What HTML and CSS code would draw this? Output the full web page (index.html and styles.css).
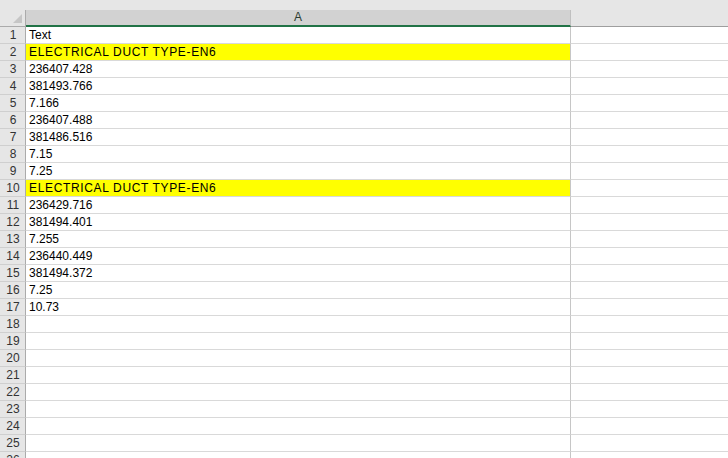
FILE: index.html
```html
<!DOCTYPE html>
<html>
<head>
<meta charset="utf-8">
<link rel="stylesheet" href="styles.css">
</head>
<body>
<div class="sheet">
  <div class="top-strip"></div>
  <div class="head">
    <div class="corner"><span class="tri"></span></div>
    <div class="col-a">A</div>
    <div class="col-rest"></div>
  </div>
  <div class="row"><div class="rh">1</div><div class="a">Text</div><div class="rest"></div></div>
  <div class="row"><div class="rh">2</div><div class="a hl">ELECTRICAL DUCT TYPE-EN6</div><div class="rest"></div></div>
  <div class="row"><div class="rh">3</div><div class="a">236407.428</div><div class="rest"></div></div>
  <div class="row"><div class="rh">4</div><div class="a">381493.766</div><div class="rest"></div></div>
  <div class="row"><div class="rh">5</div><div class="a">7.166</div><div class="rest"></div></div>
  <div class="row"><div class="rh">6</div><div class="a">236407.488</div><div class="rest"></div></div>
  <div class="row"><div class="rh">7</div><div class="a">381486.516</div><div class="rest"></div></div>
  <div class="row"><div class="rh">8</div><div class="a">7.15</div><div class="rest"></div></div>
  <div class="row"><div class="rh">9</div><div class="a">7.25</div><div class="rest"></div></div>
  <div class="row"><div class="rh">10</div><div class="a hl">ELECTRICAL DUCT TYPE-EN6</div><div class="rest"></div></div>
  <div class="row"><div class="rh">11</div><div class="a">236429.716</div><div class="rest"></div></div>
  <div class="row"><div class="rh">12</div><div class="a">381494.401</div><div class="rest"></div></div>
  <div class="row"><div class="rh">13</div><div class="a">7.255</div><div class="rest"></div></div>
  <div class="row"><div class="rh">14</div><div class="a">236440.449</div><div class="rest"></div></div>
  <div class="row"><div class="rh">15</div><div class="a">381494.372</div><div class="rest"></div></div>
  <div class="row"><div class="rh">16</div><div class="a">7.25</div><div class="rest"></div></div>
  <div class="row"><div class="rh">17</div><div class="a">10.73</div><div class="rest"></div></div>
  <div class="row"><div class="rh">18</div><div class="a"></div><div class="rest"></div></div>
  <div class="row"><div class="rh">19</div><div class="a"></div><div class="rest"></div></div>
  <div class="row"><div class="rh">20</div><div class="a"></div><div class="rest"></div></div>
  <div class="row"><div class="rh">21</div><div class="a"></div><div class="rest"></div></div>
  <div class="row"><div class="rh">22</div><div class="a"></div><div class="rest"></div></div>
  <div class="row"><div class="rh">23</div><div class="a"></div><div class="rest"></div></div>
  <div class="row"><div class="rh">24</div><div class="a"></div><div class="rest"></div></div>
  <div class="row"><div class="rh">25</div><div class="a"></div><div class="rest"></div></div>
  <div class="row"><div class="rh">26</div><div class="a"></div><div class="rest"></div></div>
</div>
</body>
</html>
```
FILE: styles.css
```css
html, body {
  margin: 0;
  padding: 0;
  background: #ffffff;
}
.sheet {
  width: 728px;
  height: 458px;
  overflow: hidden;
  font-family: "Liberation Sans", Arial, sans-serif;
  font-size: 12px;
  color: #000;
}
.top-strip {
  height: 10px;
  background: #e6e6e6;
}
.head {
  display: grid;
  grid-template-columns: 26px 545px 1fr;
  height: 17px;
  background: #e6e6e6;
}
.corner {
  border-right: 1px solid #ababab;
  border-bottom: 1px solid #ababab;
  position: relative;
}
.tri {
  position: absolute;
  right: 3px;
  bottom: 3px;
  width: 0;
  height: 0;
  border-left: 9px solid transparent;
  border-bottom: 9px solid #c6c6c6;
}
.col-a {
  background: #d2d2d2;
  border-bottom: 2px solid #217346;
  border-right: 1px solid #c0c0c0;
  text-align: center;
  line-height: 15px;
  color: #2a3b30;
}
.col-rest {
  border-bottom: 1px solid #9e9e9e;
}
.row {
  display: grid;
  grid-template-columns: 26px 545px 1fr;
  height: 17px;
}
.rh {
  background: #e6e6e6;
  border-right: 1px solid #ababab;
  border-bottom: 1px solid #cfcfcf;
  text-align: center;
  line-height: 16px;
  color: #333;
  font-size: 12px;
  padding-left: 1px;
  box-sizing: border-box;
}
.a {
  border-right: 1px solid #c6c6c6;
  border-bottom: 1px solid #d9d9d9;
  line-height: 16px;
  padding-left: 3px;
  white-space: nowrap;
  overflow: hidden;
}
.a.hl {
  background: #ffff00;
  letter-spacing: 0.65px;
}
.rest {
  border-bottom: 1px solid #d9d9d9;
}
```
